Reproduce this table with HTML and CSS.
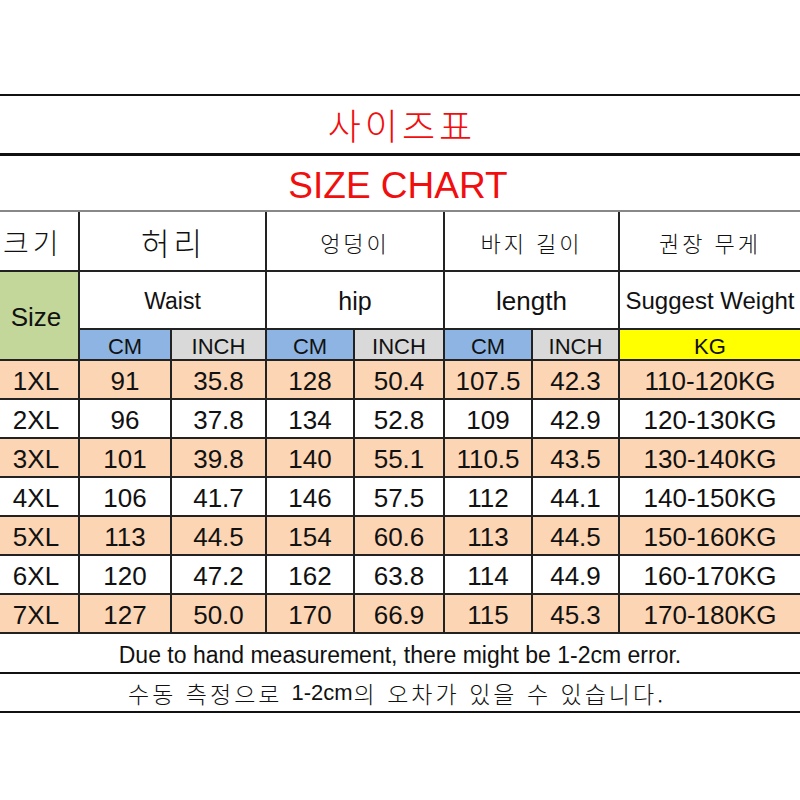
FILE: index.html
```html
<!DOCTYPE html>
<html lang="ko">
<head>
<meta charset="utf-8">
<title>사이즈표 - SIZE CHART</title>
<link rel="stylesheet" href="styles.css">
</head>
<body>
<div class="sheet">
  <div class="title title-ko">사이즈표</div>
  <div class="title title-en">SIZE CHART</div>
  <div class="chart">
    <div class="c first ko ko-size">크기</div>
    <div class="c span2 ko ko-lg">허리</div>
    <div class="c span2 ko">엉덩이</div>
    <div class="c span2 ko">바지 길이</div>
    <div class="c last ko">권장 무게</div>

    <div class="c first size-cell">Size</div>
    <div class="c span2 en waist">Waist</div>
    <div class="c span2 en hip">hip</div>
    <div class="c span2 en length">length</div>
    <div class="c last en weight">Suggest Weight</div>

    <div class="c unit cm">CM</div>
    <div class="c unit inch">INCH</div>
    <div class="c unit cm">CM</div>
    <div class="c unit inch">INCH</div>
    <div class="c unit cm">CM</div>
    <div class="c unit inch">INCH</div>
    <div class="c unit kg last">KG</div>

    <div class="c d first peach">1XL</div><div class="c d peach">91</div><div class="c d peach">35.8</div><div class="c d peach">128</div><div class="c d peach">50.4</div><div class="c d peach">107.5</div><div class="c d peach">42.3</div><div class="c d last peach">110-120KG</div>
    <div class="c d first">2XL</div><div class="c d">96</div><div class="c d">37.8</div><div class="c d">134</div><div class="c d">52.8</div><div class="c d">109</div><div class="c d">42.9</div><div class="c d last">120-130KG</div>
    <div class="c d first peach">3XL</div><div class="c d peach">101</div><div class="c d peach">39.8</div><div class="c d peach">140</div><div class="c d peach">55.1</div><div class="c d peach">110.5</div><div class="c d peach">43.5</div><div class="c d last peach">130-140KG</div>
    <div class="c d first">4XL</div><div class="c d">106</div><div class="c d">41.7</div><div class="c d">146</div><div class="c d">57.5</div><div class="c d">112</div><div class="c d">44.1</div><div class="c d last">140-150KG</div>
    <div class="c d first peach">5XL</div><div class="c d peach">113</div><div class="c d peach">44.5</div><div class="c d peach">154</div><div class="c d peach">60.6</div><div class="c d peach">113</div><div class="c d peach">44.5</div><div class="c d last peach">150-160KG</div>
    <div class="c d first">6XL</div><div class="c d">120</div><div class="c d">47.2</div><div class="c d">162</div><div class="c d">63.8</div><div class="c d">114</div><div class="c d">44.9</div><div class="c d last">160-170KG</div>
    <div class="c d first peach">7XL</div><div class="c d peach">127</div><div class="c d peach">50.0</div><div class="c d peach">170</div><div class="c d peach">66.9</div><div class="c d peach">115</div><div class="c d peach">45.3</div><div class="c d last peach">170-180KG</div>

    <div class="c note note-en">Due to hand measurement, there might be 1-2cm error.</div>
    <div class="c note note-ko"><span>수동 측정으로</span><span class="latin">1-2cm</span><span>의 오차가 있을 수 있습니다.</span></div>
  </div>
</div>
</body>
</html>
```

FILE: styles.css
```css
* { box-sizing: border-box; }

html, body {
  margin: 0;
  padding: 0;
  background: #ffffff;
}

body {
  width: 800px;
  height: 800px;
  overflow: hidden;
  font-family: "Liberation Sans", Arial, sans-serif;
  color: #111;
}

.sheet {
  padding-top: 94px;
  width: 800px;
}

.title {
  display: flex;
  align-items: center;
  justify-content: center;
  color: #f00e0e;
  width: 800px;
}

.title-ko {
  height: 59px;
  border-top: 2px solid #111;
  font-family: "Noto Sans CJK KR", sans-serif;
  font-weight: 300;
  font-size: 36px;
  letter-spacing: 4px;
  padding-left: 4px;
  padding-bottom: 2px;
}

.title-en {
  height: 59px;
  border-top: 3px solid #111;
  border-bottom: 2px solid #888;
  font-size: 37px;
  padding-top: 6px;
  padding-right: 4px;
}

.chart {
  display: grid;
  grid-template-columns: 80px 92px 95px 88px 90px 88px 87px 180px;
  grid-template-rows: 60px 58px 31px repeat(7, 39px) 40px 39px;
  width: 800px;
}

.c {
  display: flex;
  align-items: center;
  justify-content: center;
  border-right: 2px solid #222;
  border-bottom: 2px solid #222;
  white-space: nowrap;
  overflow: hidden;
}

.c.last { border-right: none; }

.span2 { grid-column: span 2; }

.first { padding-right: 6px; }

.ko {
  font-family: "Noto Sans CJK KR", sans-serif;
  font-weight: 300;
  font-size: 22px;
  letter-spacing: 3px;
  padding-top: 1px;
}

.ko-lg {
  font-size: 31px;
  letter-spacing: 4px;
  padding-left: 2px;
}

.ko-size {
  font-size: 28px;
  letter-spacing: 4px;
  justify-content: flex-start;
  padding-left: 3px;
}

.size-cell {
  grid-row: span 2;
  background: #c4d79b;
  font-size: 26px;
  padding-top: 4px;
}

.en {
  font-size: 23px;
  padding-top: 2px;
}

.hip { font-size: 25px; }
.length { font-size: 26px; }
.weight { font-size: 24px; }

.unit {
  font-size: 22px;
  padding-top: 5px;
}

.cm { background: #8db4e2; }
.inch { background: #d9d9d9; }
.kg { background: #ffff00; }

.d {
  font-size: 26px;
  padding-top: 3px;
}

.peach { background: #fcd5b4; }

.note {
  grid-column: 1 / -1;
  border-right: none;
  border-bottom: 2px solid #111;
}

.note-en {
  font-size: 23px;
  padding-top: 4px;
}

.note-ko {
  font-family: "Noto Sans CJK KR", sans-serif;
  font-weight: 300;
  font-size: 23px;
  letter-spacing: 3px;
  padding-top: 1px;
  padding-right: 6px;
}

.note-ko .latin {
  font-family: "Liberation Sans", Arial, sans-serif;
  font-size: 22px;
  letter-spacing: 0;
  margin-left: 9px;
  margin-right: 1px;
}
```
